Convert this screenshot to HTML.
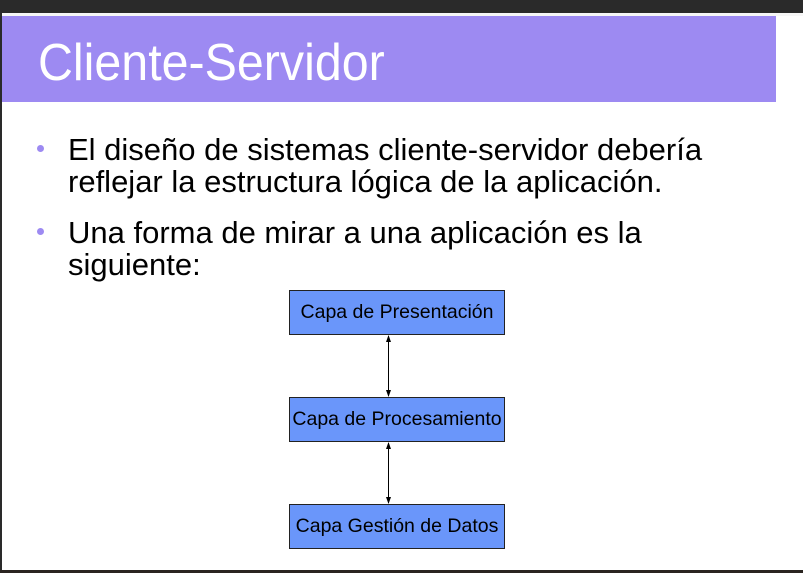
<!DOCTYPE html>
<html><head><meta charset="utf-8"><style>
html,body{margin:0;padding:0;}
body{width:803px;height:573px;position:relative;overflow:hidden;background:#fff;font-family:"Liberation Sans",sans-serif;}
.topdark{position:absolute;left:0;top:0;width:803px;height:13px;background:#2a2a2a;}
.topgray{position:absolute;left:0;top:13px;width:803px;height:3px;background:#f6f6f6;}
.leftdark{position:absolute;left:0;top:0;width:2px;height:573px;background:#2a2a2a;}
.bot{position:absolute;left:0;top:570px;width:803px;height:3px;background:#2a2420;}
.title{position:absolute;left:2px;top:16px;width:774px;height:86px;background:#9d8af2;}
.title span{position:absolute;left:36px;top:21px;font-size:52px;line-height:52px;color:#fff;white-space:nowrap;transform:scaleX(0.93);transform-origin:0 0;}
.t{position:absolute;left:68px;font-size:31px;line-height:32px;color:#000;white-space:nowrap;}
.dot{position:absolute;left:37px;width:7px;height:7px;border-radius:50%;background:#9d8af2;}
.box{position:absolute;left:289px;width:214px;height:43px;background:#6a96fa;border:1px solid #222;font-size:19.5px;line-height:43px;text-align:center;color:#000;white-space:nowrap;overflow:visible;}
</style></head><body>
<div class="topdark"></div><div class="topgray"></div><div class="leftdark"></div>
<div class="title"><span>Cliente-Servidor</span></div>
<div class="dot" style="top:145px"></div>
<div class="t" style="top:134px">El diseño de sistemas cliente-servidor debería</div>
<div class="t" style="top:166px">reflejar la estructura lógica de la aplicación.</div>
<div class="dot" style="top:228px"></div>
<div class="t" style="top:217px">Una forma de mirar a una aplicación es la</div>
<div class="t" style="top:249px">siguiente:</div>
<div class="box" style="top:290px">Capa de Presentación</div>
<div class="box" style="top:397px">Capa de Procesamiento</div>
<div class="box" style="top:504px">Capa Gestión de Datos</div>
<svg style="position:absolute;left:0;top:0" width="803" height="573">
<line x1="388.5" y1="336" x2="388.5" y2="396" stroke="#000" stroke-width="1"/>
<polygon points="388.5,335 386,342 391,342" fill="#000"/>
<polygon points="388.5,397 386,390 391,390" fill="#000"/>
<line x1="388.5" y1="443" x2="388.5" y2="503" stroke="#000" stroke-width="1"/>
<polygon points="388.5,442 386,449 391,449" fill="#000"/>
<polygon points="388.5,504 386,497 391,497" fill="#000"/>
</svg>
<div class="bot"></div>
</body></html>
